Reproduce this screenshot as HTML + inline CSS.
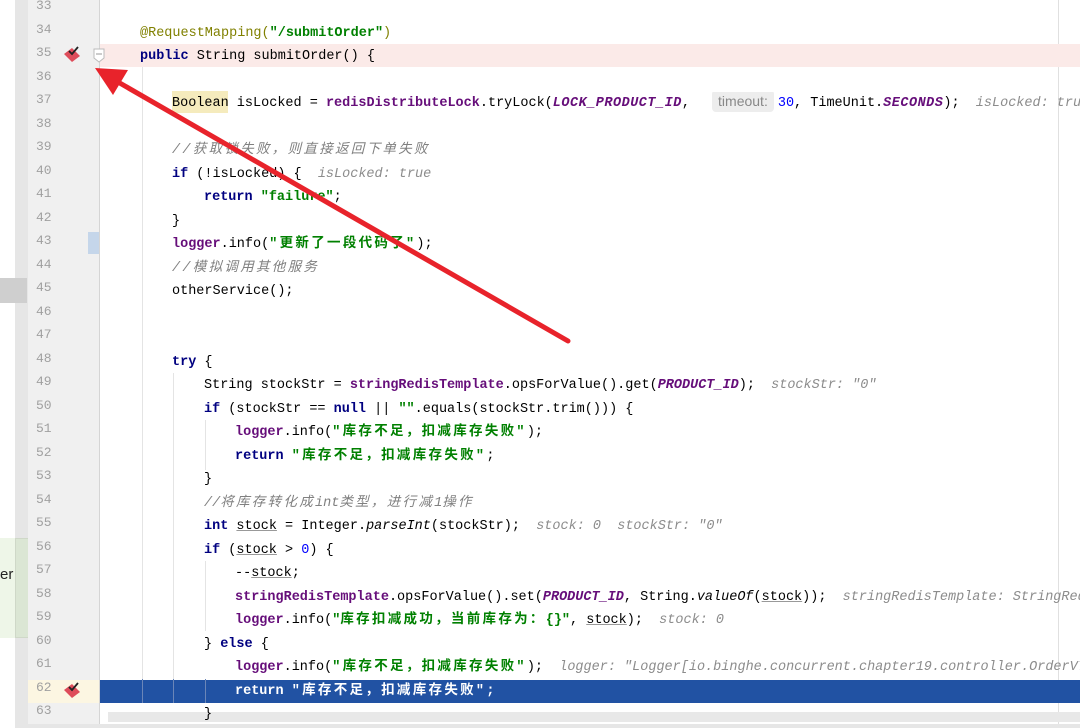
<!DOCTYPE html>
<html><head><meta charset="utf-8"><style>
html,body{margin:0;padding:0;width:1080px;height:728px;overflow:hidden;background:#fff;position:relative}
.abs{position:absolute}
.ln{position:absolute;left:0;width:1080px;height:23.5px;line-height:23.5px;overflow:hidden}
.num{position:absolute;left:36px;width:20px;font:13px "Liberation Mono",monospace;color:#a0a0a0}
.code{position:absolute;top:0;left:100px;white-space:pre;font:13.5px "Liberation Mono","Noto Sans CJK SC",monospace;color:#000;line-height:23.5px}
.code *{line-height:0}
.k{color:#000080;font-weight:bold}
.s{color:#008000;font-weight:bold}
.f{color:#660e7a;font-weight:bold}
.fi{color:#660e7a;font-weight:bold;font-style:italic}
.i{font-style:italic}
.c{color:#808080;font-style:italic}
.h{color:#8c8c8c;font-style:italic}
.n{color:#0000ff}
.a{color:#808000}
.u{text-decoration:underline;text-decoration-color:#999}
.z{letter-spacing:2.3px}
</style></head><body>
<div class="abs" style="left:0;top:0;width:15px;height:728px;background:#fff"></div>
<div class="abs" style="left:15px;top:0;width:13px;height:728px;background:#e6e6e6"></div>
<div class="abs" style="left:0;top:278px;width:27px;height:25px;background:#cfcfcf"></div>
<div class="abs" style="left:0;top:538px;width:28px;height:100px;background:#eef6e8"></div>
<div class="abs" style="left:15px;top:538px;width:12px;height:98px;background:#dbe6d4;border:1px solid #cfd8c8"></div>
<div class="abs" style="left:0;top:566px;font:15px 'Liberation Sans',sans-serif;color:#222">er</div>
<div class="abs" style="left:28px;top:0;width:71px;height:728px;background:#f0f0f0"></div>
<div class="abs" style="left:99px;top:0;width:1px;height:728px;background:#d5d5d5"></div>
<div class="abs" style="left:1058px;top:0;width:1px;height:728px;background:#e0e0e0"></div>
<div class="abs" style="left:100px;top:43.5px;width:980px;height:23.5px;background:#fbeae8"></div>
<div class="abs" style="left:100px;top:679.5px;width:980px;height:23.5px;background:#2152a3"></div>
<div class="abs" style="left:28px;top:679.5px;width:71px;height:23.5px;background:#fcf6e2"></div>
<div class="abs" style="left:88px;top:232px;width:11px;height:22px;background:#c5d6ea"></div>
<div class="abs" style="left:172px;top:91px;width:56px;height:22px;background:#f5ebbd"></div>
<div class="abs" style="left:142px;top:67px;width:1px;height:612px;background:#e4e4e4"></div>
<div class="abs" style="left:173px;top:373px;width:1px;height:306px;background:#e4e4e4"></div>
<div class="abs" style="left:205px;top:420px;width:1px;height:50px;background:#e4e4e4"></div>
<div class="abs" style="left:205px;top:561px;width:1px;height:70px;background:#e4e4e4"></div>
<div class="abs" style="left:142px;top:679px;width:1px;height:24px;background:#6b86b8"></div>
<div class="abs" style="left:173px;top:679px;width:1px;height:24px;background:#6b86b8"></div>
<div class="abs" style="left:205px;top:679px;width:1px;height:24px;background:#6b86b8"></div>
<div class="abs" style="left:108px;top:712px;width:972px;height:10px;background:#e8e8e8"></div>
<div class="abs" style="left:28px;top:724px;width:1052px;height:4px;background:#e6e6e6"></div>

<div class="ln" style="top:-1.75px"><span class="num">33</span></div>
<div class="ln" style="top:21.75px"><span class="num">34</span><span class="code" style="left:140px"><span class="a">@RequestMapping(</span><span class="s">"/submitOrder"</span><span class="a">)</span></span></div>
<div class="ln" style="top:45.25px"><span class="num">35</span><span class="code" style="left:140px"><span class="k">public</span> String submitOrder() {</span></div>
<div class="ln" style="top:68.75px"><span class="num">36</span></div>
<div class="ln" style="top:92.25px"><span class="num">37</span><span class="code" style="left:172px">Boolean isLocked = <span class="f">redisDistributeLock</span>.tryLock(<span class="fi" style="letter-spacing:0.5px">LOCK_PRODUCT_ID</span>, <span style="font:14px 'Liberation Sans',sans-serif;color:#888;background:#ededed;border-radius:4px;padding:3px 6px;margin-left:14px;margin-right:4px">timeout:</span><span class="n">30</span>, TimeUnit.<span class="fi" style="letter-spacing:0.5px">SECONDS</span>);  <span class="h">isLocked: true</span></span></div>
<div class="ln" style="top:115.75px"><span class="num">38</span></div>
<div class="ln" style="top:139.25px"><span class="num">39</span><span class="code" style="left:172px"><span class="c z">//获取锁失败，则直接返回下单失败</span></span></div>
<div class="ln" style="top:162.75px"><span class="num">40</span><span class="code" style="left:172px"><span class="k">if</span> (!isLocked) {  <span class="h">isLocked: true</span></span></div>
<div class="ln" style="top:186.25px"><span class="num">41</span><span class="code" style="left:204px"><span class="k">return</span> <span class="s">"failure"</span>;</span></div>
<div class="ln" style="top:209.75px"><span class="num">42</span><span class="code" style="left:172px">}</span></div>
<div class="ln" style="top:233.25px"><span class="num">43</span><span class="code" style="left:172px"><span class="f">logger</span>.info(<span class="s z">"更新了一段代码了"</span>);</span></div>
<div class="ln" style="top:256.75px"><span class="num">44</span><span class="code" style="left:172px"><span class="c z">//模拟调用其他服务</span></span></div>
<div class="ln" style="top:280.25px"><span class="num">45</span><span class="code" style="left:172px">otherService();</span></div>
<div class="ln" style="top:303.75px"><span class="num">46</span></div>
<div class="ln" style="top:327.25px"><span class="num">47</span></div>
<div class="ln" style="top:350.75px"><span class="num">48</span><span class="code" style="left:172px"><span class="k">try</span> {</span></div>
<div class="ln" style="top:374.25px"><span class="num">49</span><span class="code" style="left:204px">String stockStr = <span class="f">stringRedisTemplate</span>.opsForValue().get(<span class="fi">PRODUCT_ID</span>);  <span class="h">stockStr: "0"</span></span></div>
<div class="ln" style="top:397.75px"><span class="num">50</span><span class="code" style="left:204px"><span class="k">if</span> (stockStr == <span class="k">null</span> || <span class="s">""</span>.equals(stockStr.trim())) {</span></div>
<div class="ln" style="top:421.25px"><span class="num">51</span><span class="code" style="left:235px"><span class="f">logger</span>.info(<span class="s z">"库存不足，扣减库存失败"</span>);</span></div>
<div class="ln" style="top:444.75px"><span class="num">52</span><span class="code" style="left:235px"><span class="k">return</span> <span class="s z">"库存不足，扣减库存失败"</span>;</span></div>
<div class="ln" style="top:468.25px"><span class="num">53</span><span class="code" style="left:204px">}</span></div>
<div class="ln" style="top:491.75px"><span class="num">54</span><span class="code" style="left:204px"><span class="c">//<span class="z">将库存转化成</span>int<span class="z">类型，进行减</span>1<span class="z">操作</span></span></span></div>
<div class="ln" style="top:515.25px"><span class="num">55</span><span class="code" style="left:204px"><span class="k">int</span> <span class="u">stock</span> = Integer.<span class="i">parseInt</span>(stockStr);  <span class="h">stock: 0  stockStr: "0"</span></span></div>
<div class="ln" style="top:538.75px"><span class="num">56</span><span class="code" style="left:204px"><span class="k">if</span> (<span class="u">stock</span> &gt; <span class="n">0</span>) {</span></div>
<div class="ln" style="top:562.25px"><span class="num">57</span><span class="code" style="left:235px">--<span class="u">stock</span>;</span></div>
<div class="ln" style="top:585.75px"><span class="num">58</span><span class="code" style="left:235px"><span class="f">stringRedisTemplate</span>.opsForValue().set(<span class="fi">PRODUCT_ID</span>, String.<span class="i">valueOf</span>(<span class="u">stock</span>));  <span class="h">stringRedisTemplate: StringRedis</span></span></div>
<div class="ln" style="top:609.25px"><span class="num">59</span><span class="code" style="left:235px"><span class="f">logger</span>.info(<span class="s">"<span class="z">库存扣减成功，当前库存为：</span>{}"</span>, <span class="u">stock</span>);  <span class="h">stock: 0</span></span></div>
<div class="ln" style="top:632.75px"><span class="num">60</span><span class="code" style="left:204px">} <span class="k">else</span> {</span></div>
<div class="ln" style="top:656.25px"><span class="num">61</span><span class="code" style="left:235px"><span class="f">logger</span>.info(<span class="s z">"库存不足，扣减库存失败"</span>);  <span class="h">logger: "Logger[io.binghe.concurrent.chapter19.controller.OrderV7C</span></span></div>
<div class="ln" style="top:679.75px"><span class="num">62</span><span class="code" style="left:235px;color:#fff;font-weight:bold">return <span class="z">"库存不足，扣减库存失败"</span>;</span></div>
<div class="ln" style="top:703.25px"><span class="num">63</span><span class="code" style="left:204px">}</span></div>

<svg class="abs" style="left:0;top:0" width="1080" height="728">
 <g transform="translate(72,54)"><path d="M-8,0 L0,-6 L8,2 L0,8 Z" fill="#de4c5a"/><path d="M-3,-3 L0,0 L6,-7" stroke="#222" stroke-width="1.8" fill="none"/></g>
 <g transform="translate(72,690)"><path d="M-8,0 L0,-6 L8,2 L0,8 Z" fill="#de4c5a"/><path d="M-3,-3 L0,0 L6,-7" stroke="#222" stroke-width="1.8" fill="none"/></g>
 <path d="M94,49 H104 V58 L99,62 L94,58 Z" fill="#fff" stroke="#bbb"/>
 <line x1="96" y1="54" x2="102" y2="54" stroke="#999"/>
 <line x1="568" y1="341" x2="118" y2="82" stroke="#e8232b" stroke-width="5" stroke-linecap="round"/>
 <path d="M95,68 L128,70 L113,95 Z" fill="#e8232b"/>
</svg>
</body></html>
